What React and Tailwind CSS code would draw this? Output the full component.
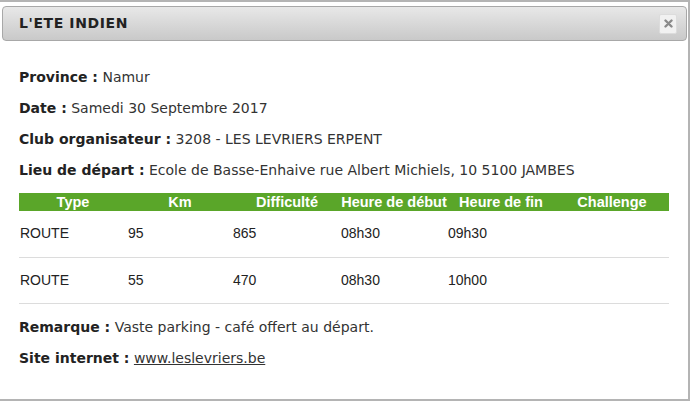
const ROWS = [
  { type: 'ROUTE', km: '95', diff: '865', debut: '08h30', fin: '09h30', challenge: '' },
  { type: 'ROUTE', km: '55', diff: '470', debut: '08h30', fin: '10h00', challenge: '' },
]

const COLS = ['Type', 'Km', 'Difficulté', 'Heure de début', 'Heure de fin', 'Challenge']
const WIDTHS = ['w-[108px]', 'w-[106px]', 'w-[108px]', 'w-[106px]', 'w-[108px]', 'w-[114px]']

function Field({ label, children }) {
  return (
    <p className="text-[14px] leading-[16px] text-[#333] mb-[15px]">
      <b className="text-[#222]">{label} :</b> {children}
    </p>
  )
}

export default function App() {
  return (
    <div className="w-[691px] h-[407px] bg-white overflow-hidden font-['DejaVu_Sans',sans-serif]">
      <div className="w-[690px] h-[401px] border-t-2 border-r-2 border-b-2 border-[#b4b4b4] pt-[4px] pl-[2px] pr-[1px]">
        {/* header */}
        <div className="h-[35px] flex items-center justify-between rounded-[4px] border border-[#a8a8a8] bg-gradient-to-b from-[#e8e8e8] to-[#c9c9c9] pl-[16px] pr-[9px]">
          <span className="text-[14px] font-bold text-[#222] tracking-[0.6px]">L'ETE INDIEN</span>
          <button className="w-[18px] h-[20px] flex items-center justify-center bg-[#f1f1f1] border border-[#dcdcdc] rounded-[2px]">
            <svg width="9" height="9" viewBox="0 0 9 9">
              <path d="M1.5 1.5 L7.5 7.5 M7.5 1.5 L1.5 7.5" stroke="#8a8a8a" strokeWidth="2.4" strokeLinecap="round" />
            </svg>
          </button>
        </div>

        {/* body */}
        <div className="pl-[17px] pr-[18px] pt-[28px]">
          <Field label="Province">Namur</Field>
          <Field label="Date">Samedi 30 Septembre 2017</Field>
          <Field label="Club organisateur">3208 - LES LEVRIERS ERPENT</Field>
          <Field label="Lieu de départ">Ecole de Basse-Enhaive rue Albert Michiels, 10 5100 JAMBES</Field>

          <table className="w-[650px] table-fixed border-collapse font-['Liberation_Sans',Arial,sans-serif] text-[14px] text-[#222] mt-[1px]">
            <colgroup>
              {WIDTHS.map((w, i) => (
                <col key={i} className={w} />
              ))}
            </colgroup>
            <thead>
              <tr className="bg-[#5aa629] h-[18px]">
                {COLS.map((c) => (
                  <th key={c} className="text-white font-bold text-center text-[14.5px] p-0 leading-[18px] whitespace-nowrap">{c}</th>
                ))}
              </tr>
            </thead>
            <tbody>
              {ROWS.map((r, i) => (
                <tr key={i} className="h-[46px] border-b border-[#dcdcdc]">
                  <td className="pl-[1px]">{r.type}</td>
                  <td className="pl-[1px]">{r.km}</td>
                  <td className="pl-0">{r.diff}</td>
                  <td className="pl-0">{r.debut}</td>
                  <td className="pl-[1px]">{r.fin}</td>
                  <td>{r.challenge}</td>
                </tr>
              ))}
            </tbody>
          </table>

          <div className="pt-[15px]">
            <Field label="Remarque">Vaste parking - café offert au départ.</Field>
            <Field label="Site internet">
              <a href="#" className="underline text-[#333]">www.leslevriers.be</a>
            </Field>
          </div>
        </div>
      </div>
    </div>
  )
}
